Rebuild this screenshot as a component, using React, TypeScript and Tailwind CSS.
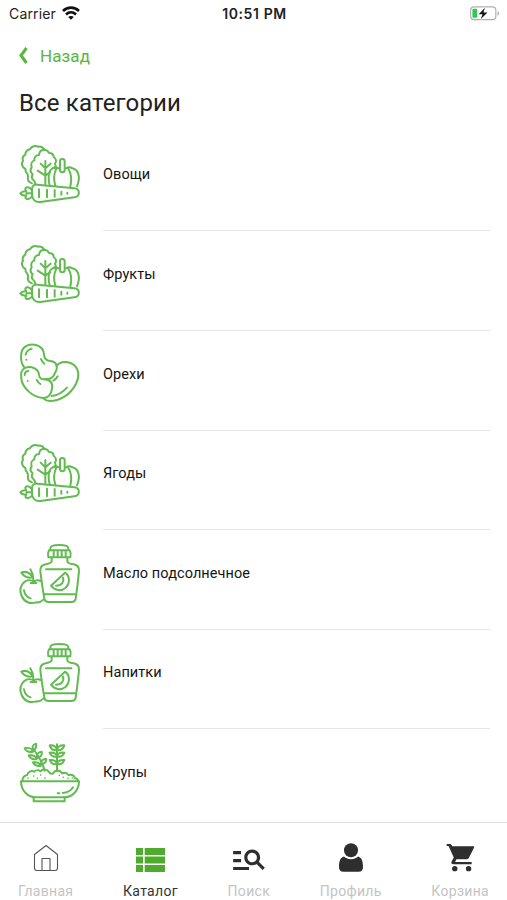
import { ReactNode } from 'react';
import { MdManageSearch } from 'react-icons/md';

interface Category {
    id: number;
    name: string;
    icon: ReactNode;
}

interface Tab {
    name: string;
    icon: ReactNode;
    active?: boolean;
}

const iconProps = {
    className: 'w-[60px] h-[60px] shrink-0 overflow-visible text-[#62bb50]',
    fill: 'none',
    stroke: 'currentColor',
    strokeWidth: 6,
    strokeLinecap: 'round' as const,
    strokeLinejoin: 'round' as const,
};

function VegetablesIcon() {
    return (
        <svg viewBox="30 30 180 180" {...iconProps}>
            {/* салат */}
            <path d="M66 145c-9-3-14-10-12-18 1-5 0-8-3-12-5-4-5-8-5-13-10-5-13-16-7-25-3-8 0-14 7-18 0-8 5-14 14-16 5-9 15-13 24-8 8-2 14 2 18 8" />
            <path d="M76 147c-1-7-3-10-8-14-4-5-3-10 0-15-7-6-8-14-3-21-3-9 0-18 8-21-1-9 5-16 14-16 1-10 8-16 16-16 8 1 12 5 14 10 9 0 14 5 14 12 8 5 9 14 4 20 3 5 3 9 0 14" />
            <path d="M106 148V78M106 100l-14-14M106 100l16-14M106 122l-23-15M106 122l14-10" />
            {/* тыква */}
            <path d="M150 106V78c0-8 14-8 14 0v28c0 8-14 8-14 0z" />
            <path d="M146 100c-8-5-14-3-18 0-9 4-12 16-12 28 0 9 1 16 3 22M139 101c-7 14-8 35-3 51M168 100c8-5 15-3 19 0 21 5 24 30 14 54M175 101c9 14 10 36 6 54" />
            {/* морковь */}
            <path d="M66 162c0-9 7-14 16-13l111 11c18 2 18 25 0 27l-102 14c-16 2-25-10-25-22z" />
            <path d="M64 164c-7-9-16-9-18-3 0 4 1 6 3 8-9-2-14 1-18 6 4 6 10 8 18 6-2 3-3 6-2 9 4 4 11 2 18-4M49 175h13" />
            <path d="M87 163v24M111 164v23M134 165v20M154 170v9M172 173v3" />
        </svg>
    );
}

function NutsIcon() {
    return (
        <svg viewBox="30 28 180 180" {...iconProps}>
            <path d="M42 97C31 84 31 62 36 48c6-15 24-22 42-17 16 4 23 15 24 29 1 12 7 18 18 19 12 1 19 7 20 15" />
            <path d="M140 94c3 11-3 16-7 25-4 11-12 16-30 15" />
            <path d="M140 93c10-15 37-14 51-3 18 15 17 38 7 57-17 34-49 52-80 52-7 0-13-3-18-8" />
            <path d="M34 112c5-13 19-17 31-14 13 3 21 12 22 23 1 9 7 13 16 13 18 1 26 11 23 27-2 18-12 29-27 29-31-2-61-30-65-57-1-8-1-15 0-21z" />
            <path d="M47 60c1-8 9-16 18-18M49 75h.1M93 73c2 6 5 10 10 14M44 121c0-6 5-11 11-12M53 139h.1M80 136c3 5 6 9 11 12M130 138c5-2 9-7 13-13M125 184c16-1 32-10 46-25" />
        </svg>
    );
}

function BottleIcon() {
    return (
        <svg viewBox="30 25 180 180" {...iconProps}>
            {/* крышка и бутылка */}
            <path d="M121 42v-4c0-13 54-13 54 0v4M117 44h62c4 7 4 14 2 21h-66c-2-7-2-14 2-21zM131 45v18M143 45v18M155 45v18M167 45v18" />
            <path d="M125 66v11c0 5-8 7-18 9-12 2-17 8-16 21l6 45 6 37c1 7 5 10 13 10h68c8 0 12-3 13-10l5-37 5-45c1-13-5-19-16-21-9-1-19-3-19-9V66" />
            <path d="M108 101h76M102 176h93" />
            <path d="M165 111c15 10 16 32 2 45-14 12-33 9-44-6zM159 126c4 13-5 24-21 24" />
            {/* яблоко */}
            <path d="M92 136c-8-4-16-2-21 2-8-6-20-6-28 1-13 11-14 28-8 42 8 19 26 25 43 19 8 1 17-3 23-9M70 143v-12c0-13-4-22-9-30M68 125c-14 3-26-2-34-14 13-6 27 0 34 14zM62 142h17M42 164c2 12 10 21 20 24" />
        </svg>
    );
}

function GrainsIcon() {
    return (
        <svg viewBox="30 32 180 180" {...iconProps}>
            <path d="M33 147h174c0 27-19 48-47 48H80c-28 0-47-21-47-48z" />
            <path d="M71 196v11h93v-11" />
            <path d="M37 145c1-10 7-16 15-17 1-9 12-15 21-10 6-6 14-5 18-1 9-8 19-8 25 1 3 5 8 7 13 6 6-12 20-13 27-1 9-3 16 0 19 5 10-2 18 2 20 10 7 1 9 4 9 8" />
            <path d="M141 117V36" />
            <path d="M141 53c-10 2-18-2-22-14 12-1 20 4 22 14zM141 53c10 2 18-2 22-14-12-1-20 4-22 14zM141 73c-10 2-18-2-22-12 12-1 20 2 22 12zM141 73c10 2 18-2 22-12-12-1-20 2-22 12zM141 95c-10 2-18-2-22-12 12-1 20 2 22 12zM141 95c10 2 18-2 22-12-12-1-20 2-22 12z" />
            <path d="M104 115C98 92 82 65 68 47M71 54c6-4 9-10 7-20-10 3-13 9-7 20zM69 58c-12 2-21-1-25-10 11-3 22 0 25 10zM82 77c11-3 15-9 13-19-11 1-17 9-13 19zM80 80c-11 2-20-2-24-11 12-1 22 2 24 11zM94 97c10-3 16-9 14-18-11 1-17 9-14 18zM92 101c-11 1-19-2-23-11 12-2 20 2 23 11z" />
            <path strokeWidth="5" d="M54 137h.1M71 131h.1M82 138h.1M92 128h.1M105 137h.1M148 129h.1M160 135h.1M174 138h.1M187 137h.1" />
            <path d="M143 183h5M158 182c14-1 25-7 31-17" />
        </svg>
    );
}

function HomeIcon() {
    return (
        <svg className="w-[26px] h-7" viewBox="0 0 26 28" fill="none" stroke="#555" strokeWidth="1.1" strokeLinejoin="round">
            <path d="M1.500 10.500 13 1.500l11.500 9v13.500c0 1.700-.8 2.500-2.500 2.500H4c-1.700 0-2.500-.8-2.500-2.500z" />
            <path d="M9 26V14.500h8V26" />
        </svg>
    );
}

function CatalogIcon() {
    return (
        <svg className="w-[29px] h-6 mt-[5px]" viewBox="0 0 29 24" fill="#4fab2d">
            <path d="M0 0h7v7H0zM8.700 0H29v7H8.700zM0 8.500h7v7H0zM8.700 8.500H29v7H8.700zM0 17h7v7H0zM8.700 17H29v7H8.700z" />
        </svg>
    );
}

function ProfileIcon() {
    return (
        <svg className="w-6 h-[29px]" viewBox="0 0 24 29" fill="#2e2e2e">
            <circle cx="12" cy="7.200" r="7" />
            <path d="M5 13.500c1.900 1.700 4.300 2.700 7 2.700s5.100-1 7-2.700c3.500.8 5 4.500 5 10.500 0 3.200-1.300 4.700-4.500 4.700h-15C1.300 28.700 0 27.200 0 24c0-6 1.500-9.700 5-10.500z" />
        </svg>
    );
}

function CartIcon() {
    return (
        <svg className="w-[29px] h-[29px]" viewBox="590 86 86 86" fill="#2e2e2e">
            <path d="M592 89h12l5 7h63c2 0 2 2 1 4l-15 30c-2 3-3 4-6 4h-31l-4 8h49v7h-53c-6 0-9-4-6-9l6-11-15-33-2-1h-4z" />
            <circle cx="616" cy="162" r="8" />
            <circle cx="657" cy="162" r="8" />
        </svg>
    );
}

const categories: Category[] = [
    { id: 1, name: 'Овощи', icon: <VegetablesIcon /> },
    { id: 2, name: 'Фрукты', icon: <VegetablesIcon /> },
    { id: 3, name: 'Орехи', icon: <NutsIcon /> },
    { id: 4, name: 'Ягоды', icon: <VegetablesIcon /> },
    { id: 5, name: 'Масло подсолнечное', icon: <BottleIcon /> },
    { id: 6, name: 'Напитки', icon: <BottleIcon /> },
    { id: 7, name: 'Крупы', icon: <GrainsIcon /> },
];

const tabs: Tab[] = [
    { name: 'Главная', icon: <HomeIcon /> },
    { name: 'Каталог', icon: <CatalogIcon />, active: true },
    { name: 'Поиск', icon: <MdManageSearch className="w-[38px] h-[38px] mt-[3px] text-[#2e2e2e]" /> },
    { name: 'Профиль', icon: <ProfileIcon /> },
    { name: 'Корзина', icon: <CartIcon /> },
];

function StatusBar() {
    return (
        <div className="grid grid-cols-3 items-center h-7 pl-[9px] pr-[7px] font-[Inter,sans-serif] text-[14px] text-[#222]">
            <div className="flex items-center gap-[6px] pb-px tracking-[0.150px]">
                <span>Carrier</span>
                <svg className="w-[18px] h-[14px] -mt-0.5" viewBox="0 0 18 14" fill="none" stroke="#111" strokeWidth="2.600">
                    <path d="M1 5c4.500-4.500 11.500-4.500 16 0M4 8.500c3-2.800 7-2.800 10 0" />
                    <path d="M9 13.700 6.200 10.900c1.600-1.300 4-1.300 5.600 0z" fill="#111" stroke="none" />
                </svg>
            </div>
            <span className="pb-px text-center font-semibold text-[14px] tracking-[0.600px] whitespace-nowrap">10:51 PM</span>
            <svg className="justify-self-end w-[30px] h-[15px] -mt-0.5" viewBox="0 0 31 15">
                <rect x=".7" y=".7" width="26" height="13.200" rx="3.500" fill="none" stroke="#b0b0b0" strokeWidth="1.200" />
                <path d="M28.500 5v5c2-.8 2-4.200 0-5z" fill="#b0b0b0" />
                <rect x="2.500" y="2.700" width="5" height="9.300" rx="1.200" fill="#32c759" />
                <path d="M15.500 1.500 9 8.200h4l-2 5.300 7-7h-4.200z" fill="#111" stroke="#fff" strokeWidth="1.200" paintOrder="stroke" />
            </svg>
        </div>
    );
}

export default function App() {
    return (
        <div className="flex flex-col h-[900px] w-[507px] overflow-hidden bg-white font-[Roboto,sans-serif]">
            <StatusBar />

            <header className="px-[18px]">
                <button className="flex items-center gap-3 h-14 pt-px text-[17px] tracking-[0.1px] text-[#5cb53f]">
                    <svg className="w-[10px] h-[17px] -mt-0.5" viewBox="0 0 10 17" fill="none" stroke="currentColor" strokeWidth="3">
                        <path d="M8.500 1 3 8.500l5.500 7.500" />
                    </svg>
                    Назад
                </button>
                <h1 className="h-[47.800px] pl-px leading-[38px] text-[24px] tracking-[0.150px] text-[#222]">Все категории</h1>
            </header>

            {/* список категорий */}
            <main className="flex-1 min-h-0 overflow-hidden pl-5 pr-[17px]">
                {categories.map((category) => (
                    <div key={category.id} className="flex gap-[23px] h-[99.600px]">
                        <div className="pt-[13.500px]">{category.icon}</div>
                        <div className="flex-1 border-b border-[#e6e6e6] pt-[33.700px] leading-5 text-[14.500px] tracking-[0.080px] text-[#151515]">
                            {category.name}
                        </div>
                    </div>
                ))}
            </main>

            {/* нижняя навигация */}
            <nav className="flex justify-between h-[78px] shrink-0 border-t border-[#e0e0e0] px-[18px]">
                {tabs.map((tab) => (
                    <div key={tab.name} className="flex flex-col items-center">
                        <div className="flex items-center justify-center h-[58px] shrink-0 pt-[11px]">{tab.icon}</div>
                        <span
                            className={`text-[14px] leading-5 tracking-[0.3px] ${tab.active ? 'text-[#333]' : 'text-[#c4c4c4]'}`}
                        >
                            {tab.name}
                        </span>
                    </div>
                ))}
            </nav>
        </div>
    );
}
